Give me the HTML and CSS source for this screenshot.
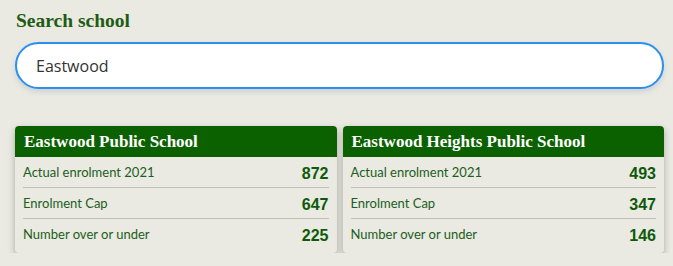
FILE: index.html
```html
<!DOCTYPE html>
<html lang="en">
<head>
    <meta charset="UTF-8">
    <meta name="viewport" content="width=device-width, initial-scale=1.0">
    <title>Search school</title>
    <link rel="stylesheet" href="styles.css">
</head>
<body>
    <div class="container">
        <h2 class="search-title">Search school</h2>
        <input type="text" class="search-input" value="Eastwood" autofocus>

        <div class="results">
            <!-- school card -->
            <div class="school">
                <h3>Eastwood Public School</h3>
                <div class="row"><span>Actual enrolment 2021</span><b>872</b></div>
                <div class="row"><span>Enrolment Cap</span><b>647</b></div>
                <div class="row"><span>Number over or under</span><b>225</b></div>
            </div>
            <div class="school">
                <h3>Eastwood Heights Public School</h3>
                <div class="row"><span>Actual enrolment 2021</span><b>493</b></div>
                <div class="row"><span>Enrolment Cap</span><b>347</b></div>
                <div class="row"><span>Number over or under</span><b>146</b></div>
            </div>
        </div>
    </div>
    <script>
        var input = document.querySelector('.search-input');
        input.focus();
        input.setSelectionRange(input.value.length, input.value.length);
    </script>
</body>
</html>
```

FILE: styles.css
```css
body {
    font-family: Lato, "Open Sans", sans-serif;
    background-color: #eaeae3;
    color: #1b5e20;
    margin: 0;
}
.container {
    padding: 9px 9px 0 15px;
}
.search-title {
    font-family: "Liberation Serif", serif;
    font-size: 19.5px;
    line-height: 24px;
    color: #1f5c12;
    margin: 0 0 9px 1px;
}
.search-input {
    display: block;
    box-sizing: border-box;
    width: 100%;
    height: 47px;
    border: 2px solid #2b8ff0;
    border-radius: 24px;
    padding: 0 19px;
    font-family: "Open Sans", sans-serif;
    font-size: 16px;
    color: #333;
    background-color: #fff;
    outline: none;
    box-shadow: 0 3px 5px rgba(120, 140, 160, 0.25);
    caret-color: #000;
}
.results {
    display: grid;
    grid-template-columns: 1fr 1fr;
    gap: 6px;
    margin-top: 37px;
}
.school {
    background-color: #eaeae3;
    border-radius: 4px;
    box-shadow: 0 3px 7px rgba(0, 0, 0, 0.28);
    overflow: hidden;
    padding-bottom: 4px;
}
.school h3 {
    font-family: "Liberation Serif", serif;
    font-size: 17px;
    line-height: 31px;
    color: #fff;
    background-color: #0b6100;
    margin: 0;
    padding: 0 9px;
}
.row {
    display: flex;
    justify-content: space-between;
    align-items: flex-end;
    margin: 0 8px;
    height: 30px;
    border-bottom: 1px solid #c0c0b8;
}
.row:last-child {
    border-bottom: none;
}
.row span {
    font-size: 13px;
    line-height: 20px;
    padding-bottom: 5px;
    color: #1b5e20;
}
.row b {
    font-family: "Liberation Sans", Arial, sans-serif;
    font-size: 16px;
    line-height: 20px;
    padding-bottom: 3px;
    color: #0f5a0a;
}
```
